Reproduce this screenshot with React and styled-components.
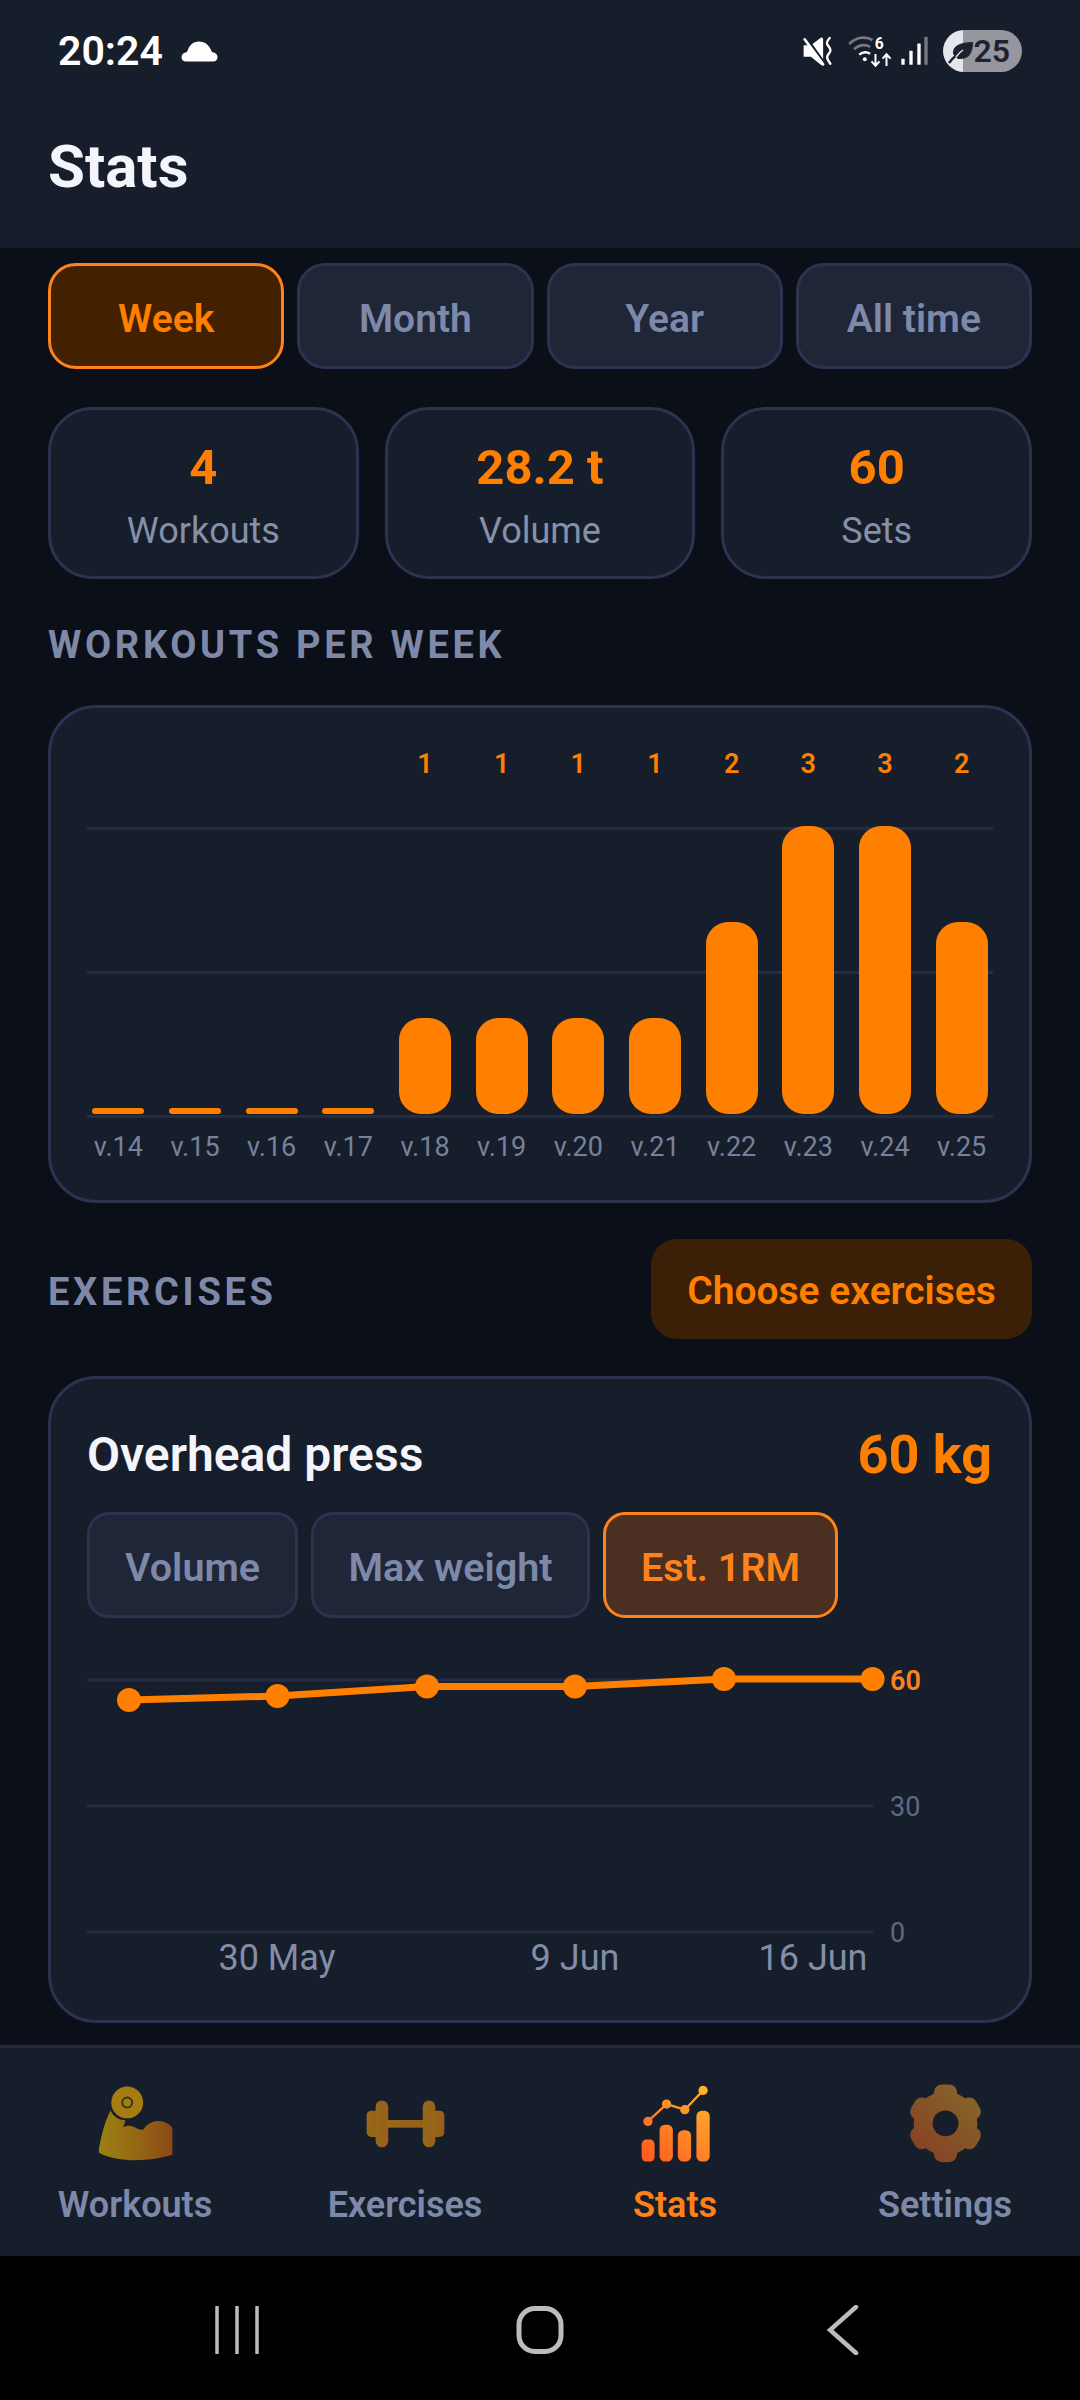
import React from "react";
import styled, { createGlobalStyle } from "styled-components";

const ORANGE = "#ff7f00";
const MUTED = "#7e89a9";
const CARD = "#171e2b";
const LINE = "#2b3350";

const GlobalStyle = createGlobalStyle`
  html, body { margin: 0; padding: 0; background: #0b0f17; }
  * { box-sizing: border-box; }
  body { font-family: Roboto, "Liberation Sans", sans-serif; }
`;

const Screen = styled.div`
  width: 1080px;
  height: 2400px;
  display: flex;
  flex-direction: column;
  overflow: hidden;
  background: #0b0f17;
`;

const Header = styled.header`
  height: 248px;
  background: ${CARD};
  flex: none;
`;

const StatusBar = styled.div`
  height: 102px;
  padding: 0 58px;
  display: flex;
  align-items: center;
  justify-content: space-between;
`;

const StatusLeft = styled.div`
  display: flex;
  align-items: center;
  gap: 18px;
  color: #fff;
  font-size: 41px;
  font-weight: 600;
`;

const StatusRight = styled.div`
  display: flex;
  align-items: center;
`;

const StatusGap = styled.div`
  width: ${(p) => p.$width}px;
`;

const BatteryPill = styled.div`
  width: 79px;
  height: 42px;
  margin-left: 13px;
  border-radius: 21px;
  display: flex;
  align-items: center;
  justify-content: flex-end;
  padding-right: 12px;
  position: relative;
  background: linear-gradient(90deg, #e6e6ea 0 25%, #96969f 25% 100%);
  color: #1c2230;
  font-size: 32px;
  font-weight: 600;
`;

const Leaf = styled.svg`
  position: absolute;
  left: 4px;
  top: 7px;
`;

const Title = styled.h1`
  margin: 0;
  padding: 37px 0 0 48px;
  font-size: 60px;
  line-height: 56px;
  font-weight: 700;
  color: #f3f5fb;
`;

const Main = styled.main`
  flex: 1;
  padding: 15px 48px 0;
  min-height: 0;
`;

const TabRow = styled.div`
  display: flex;
  gap: 13px;
`;

const Tab = styled.button`
  flex: 1;
  height: 106px;
  padding: 5px 0 0;
  border-radius: 28px;
  border: 3px solid ${(p) => (p.$active ? "#ff831c" : LINE)};
  background: ${(p) => (p.$active ? "#432000" : "#1e2638")};
  color: ${(p) => (p.$active ? ORANGE : MUTED)};
  font: 600 39px Roboto, sans-serif;
`;

const StatRow = styled.div`
  display: flex;
  gap: 26px;
  margin-top: 38px;
`;

const StatCard = styled.div`
  flex: 1;
  height: 172px;
  border-radius: 44px;
  border: 3px solid ${LINE};
  background: ${CARD};
  display: flex;
  flex-direction: column;
  align-items: center;
  padding-top: 31px;
`;

const StatValue = styled.div`
  font-size: 49px;
  line-height: 54px;
  font-weight: 700;
  color: ${ORANGE};
`;

const StatLabel = styled.div`
  margin-top: 14px;
  font-size: 36px;
  line-height: 44px;
  color: #8690a8;
`;

const SectionTitle = styled.h2`
  margin: 0;
  padding-top: ${(p) => p.$nudge || 0}px;
  font-size: 38px;
  line-height: 44px;
  font-weight: 700;
  letter-spacing: 3.7px;
  color: ${MUTED};
`;

const WeekTitle = styled(SectionTitle)`
  margin-top: 44px;
`;

const Card = styled.section`
  border-radius: 48px;
  border: 3px solid ${LINE};
  background: ${CARD};
`;

const BarCard = styled(Card)`
  height: 498px;
  margin-top: 38px;
  padding: 41px 29px 0;
`;

const ColumnGrid = styled.div`
  display: grid;
  grid-template-columns: repeat(12, 1fr);
  justify-items: center;
`;

const BarValue = styled.div`
  height: 30px;
  font-size: 27px;
  line-height: 30px;
  font-weight: 600;
  color: ${ORANGE};
`;

const Plot = styled(ColumnGrid)`
  position: relative;
  height: 292px;
  margin-top: 46px;
  padding-bottom: 3px;
  align-items: end;
`;

const GridLine = styled.div`
  position: absolute;
  left: 7px;
  right: 7px;
  top: ${(p) => p.$top}px;
  height: 3px;
  background: #262d42;
`;

const Bar = styled.div`
  position: relative;
  width: 52px;
  height: ${(p) => p.$height}px;
  border-radius: ${(p) => (p.$height < 20 ? 3 : 22)}px;
  background: ${ORANGE};
`;

const WeekLabels = styled(ColumnGrid)`
  margin-top: 15px;
`;

const WeekLabel = styled.div`
  font-size: 27px;
  line-height: 30px;
  color: #77819b;
`;

const ExerciseHead = styled.div`
  display: flex;
  align-items: center;
  justify-content: space-between;
  margin-top: 36px;
`;

const ChooseButton = styled.button`
  width: 381px;
  height: 100px;
  padding: 3px 0 0;
  border: 0;
  border-radius: 26px;
  background: #3b1f07;
  color: ${ORANGE};
  font: 600 39px Roboto, sans-serif;
`;

const ExerciseCard = styled(Card)`
  height: 647px;
  margin-top: 37px;
  padding: 46px 37px 0 36px;
`;

const ExerciseTop = styled.div`
  display: flex;
  align-items: center;
  justify-content: space-between;
  height: 58px;
`;

const ExerciseName = styled.div`
  font-size: 48px;
  font-weight: 600;
  color: #f3f5fb;
`;

const ExerciseWeight = styled.div`
  font-size: 54px;
  font-weight: 700;
  color: ${ORANGE};
`;

const ChipRow = styled.div`
  display: flex;
  gap: 13px;
  margin-top: 29px;
`;

const Chip = styled.button`
  height: 106px;
  width: ${(p) => p.$width}px;
  padding: 5px 0 0;
  border-radius: 22px;
  border: 3px solid ${(p) => (p.$active ? "#ff831c" : LINE)};
  background: ${(p) => (p.$active ? "#4b2f20" : "#1e2638")};
  color: ${(p) => (p.$active ? "#ff831c" : MUTED)};
  font: 600 39.5px Roboto, sans-serif;
`;

const LineSvg = styled.svg`
  display: block;
  margin: 32px 0 0 1px;
  overflow: visible;
  font-family: Roboto, sans-serif;
`;

const BottomNav = styled.nav`
  height: 211px;
  flex: none;
  display: grid;
  grid-template-columns: repeat(4, 1fr);
  padding-top: 35px;
  border-top: 3px solid #232a3e;
  background: ${CARD};
`;

const NavItem = styled.div`
  display: flex;
  flex-direction: column;
  align-items: center;
  color: ${(p) => (p.$active ? "#ff8016" : MUTED)};
  font-size: 36px;
  line-height: 40px;
  font-weight: 600;
`;

const NavLabel = styled.span`
  margin-top: 22px;
`;

const SystemBar = styled.div`
  height: 144px;
  flex: none;
  background: #000;
  display: flex;
  justify-content: center;
  align-items: center;
  padding-top: 4px;
`;

const SystemSlot = styled.div`
  width: 303px;
  display: flex;
  justify-content: center;
`;

const weeks = [14, 15, 16, 17, 18, 19, 20, 21, 22, 23, 24, 25];
const counts = [0, 0, 0, 0, 1, 1, 1, 1, 2, 3, 3, 2];
const linePoints = [
  [41, 50],
  [189.5, 46],
  [339, 36.5],
  [487, 36.5],
  [636, 29],
  [784.6, 29],
];

function CloudIcon() {
  return (
    <svg width="37" height="21" viewBox="0 0 37 21">
      <path
        d="M5 20.500C2 20.500 .5 18.500 .5 16S2.500 11.500 6 11C8 4.500 12 .5 18 .5S28.500 4.500 31 11c3.500 .5 5.500 2.500 5.500 5s-1.500 4.500-4.500 4.500Z"
        fill="#fff"
      />
    </svg>
  );
}

function MuteIcon() {
  return (
    <svg width="33" height="33" viewBox="185 75 100 100">
      <path d="M193 106h22l32-24 5 4v78l-5 3-32-26h-22Z" fill="#fff" />
      <path d="M202 84l60 84" stroke={CARD} strokeWidth="7" />
      <path d="M196 88l56 76" stroke="#fff" strokeWidth="8" strokeLinecap="round" />
      <path
        d="M272 84c-12 13-10 17-3 26 7 9 7 13 0 22s-7 13 5 30"
        fill="none"
        stroke="#fff"
        strokeWidth="7"
        strokeLinecap="round"
      />
    </svg>
  );
}

function WifiIcon() {
  return (
    <svg width="47" height="35" viewBox="320 70 140 105">
      <path d="M329 100c22-22 50-24 70-12" fill="none" stroke="#777a83" strokeWidth="8" />
      <path d="M344 116c14-13 32-15 48-8" fill="none" stroke="#777a83" strokeWidth="8" />
      <path d="M359 132c10-8 22-9 33-3" fill="none" stroke="#fff" strokeWidth="7" />
      <circle cx="376" cy="146" r="6" fill="#fff" />
      <text x="406" y="116" fontFamily="Roboto, sans-serif" fontSize="47" fontWeight="700" fill="#fff">
        6
      </text>
      <path d="M408 130v34m-12-12 12 13 12-13" fill="none" stroke="#fff" strokeWidth="6" />
      <path d="M441 166v-34m-12 12 12-13 12 13" fill="none" stroke="#fff" strokeWidth="6" />
    </svg>
  );
}

function SignalIcon() {
  return (
    <svg width="30" height="32" viewBox="480 75 90 95">
      <rect x="484" y="146" width="10" height="18" rx="2" fill="#fff" />
      <rect x="508" y="122" width="10" height="42" rx="2" fill="#fff" />
      <rect x="532" y="100" width="10" height="64" rx="2" fill="#fff" />
      <rect x="553" y="80" width="10" height="84" rx="2" fill="#777a83" />
    </svg>
  );
}

function LeafIcon() {
  return (
    <Leaf width="28" height="28" viewBox="0 0 28 28">
      <path d="M6 17C5 9 13 5 26 5c0 12-5 18-15 17" fill="#1c2230" />
      <path d="M2 26C7 19 11 16 19 11" fill="none" stroke="#1c2230" strokeWidth="2.500" />
      <path d="M9 20C12 16 13 15 16 13" fill="none" stroke="#e6e6ea" strokeWidth="1.500" />
    </Leaf>
  );
}

function WorkoutsIcon() {
  return (
    <svg width="83" height="80" viewBox="100 70 250 240">
      <defs>
        <linearGradient id="armFill" x1="0" y1="0" x2="1" y2="0">
          <stop offset="0" stopColor="#9a8210" />
          <stop offset="0.5" stopColor="#966814" />
          <stop offset="1" stopColor="#8c4818" />
        </linearGradient>
      </defs>
      <path
        d="M150 152C158 170 172 180 195 182L188 203C200 195 215 198 222 203 232 208 240 212 248 210 258 195 275 183 295 184 315 185 330 195 336 205V286C290 300 250 302 225 302 185 302 145 295 116 280 113 275 115 265 118 252 125 215 135 180 150 152Z"
        fill="url(#armFill)"
      />
      <circle cx="200" cy="128" r="48" fill="#a47c10" />
      <circle cx="200" cy="128" r="15" fill="none" stroke="#3a3320" strokeWidth="6" />
    </svg>
  );
}

function DumbbellIcon() {
  return (
    <svg width="83" height="80" viewBox="910 70 250 240">
      <defs>
        <linearGradient id="bellFill" x1="0" y1="0" x2="1" y2="0">
          <stop offset="0" stopColor="#966a18" />
          <stop offset="1" stopColor="#985e1c" />
        </linearGradient>
      </defs>
      <g fill="url(#bellFill)">
        <rect x="918" y="153" width="40" height="79" rx="14" />
        <rect x="945" y="122" width="38" height="141" rx="19" />
        <rect x="975" y="181" width="120" height="23" />
        <rect x="1087" y="122" width="38" height="141" rx="19" />
        <rect x="1112" y="153" width="40" height="79" rx="14" />
      </g>
    </svg>
  );
}

function StatsIcon() {
  return (
    <svg width="83" height="80" viewBox="100 70 250 240">
      <defs>
        <linearGradient id="statFill" gradientUnits="userSpaceOnUse" x1="123" y1="306" x2="328" y2="92">
          <stop offset="0" stopColor="#ff5520" />
          <stop offset="1" stopColor="#ffb52c" />
        </linearGradient>
      </defs>
      <g fill="url(#statFill)">
        <rect x="123" y="240" width="39" height="66" rx="14" />
        <rect x="177" y="195" width="40" height="111" rx="16" />
        <rect x="232" y="212" width="40" height="94" rx="16" />
        <rect x="288" y="153" width="40" height="153" rx="16" />
        <circle cx="142" cy="185" r="14" />
        <circle cx="198" cy="133" r="14" />
        <circle cx="253" cy="150" r="14" />
        <circle cx="308" cy="92" r="14" />
      </g>
      <path
        d="M142 185 198 133 253 150 308 92"
        fill="none"
        stroke="url(#statFill)"
        strokeWidth="7"
      />
    </svg>
  );
}

function GearIcon() {
  return (
    <svg width="83" height="80" viewBox="910 70 250 240">
      <defs>
        <linearGradient id="gearFill" x1="0" y1="1" x2="1" y2="0">
          <stop offset="0" stopColor="#863a24" />
          <stop offset="1" stopColor="#866c2a" />
        </linearGradient>
        <mask id="gearShape">
          <g fill="#fff">
            <circle cx="1035" cy="191" r="96" />
            <rect x="1000" y="74" width="70" height="234" rx="24" />
            <rect x="1000" y="78" width="70" height="226" rx="24" transform="rotate(60 1035 191)" />
            <rect x="1000" y="78" width="70" height="226" rx="24" transform="rotate(120 1035 191)" />
          </g>
          <circle cx="1035" cy="191" r="39" fill="#000" />
        </mask>
      </defs>
      <rect x="910" y="70" width="250" height="240" fill="url(#gearFill)" mask="url(#gearShape)" />
    </svg>
  );
}

function MenuIcon() {
  return (
    <svg width="46" height="48" viewBox="0 0 46 48">
      <path d="M3 1v46M23 1v46M43 1v46" stroke="#bcbcbc" strokeWidth="3.500" strokeLinecap="round" />
    </svg>
  );
}

function HomeIcon() {
  return (
    <svg width="48" height="48" viewBox="0 0 48 48">
      <rect x="3" y="2.500" width="42" height="43" rx="16" fill="none" stroke="#bcbcbc" strokeWidth="5" />
    </svg>
  );
}

function BackIcon() {
  return (
    <svg width="32" height="50" viewBox="0 0 32 50">
      <path d="M29 2 3 25l26 23" fill="none" stroke="#bcbcbc" strokeWidth="4.500" strokeLinecap="round" />
    </svg>
  );
}

function WeekChart() {
  return (
    <BarCard>
      <ColumnGrid>
        {counts.map((count, i) => (
          <BarValue key={weeks[i]}>{count > 0 ? count : ""}</BarValue>
        ))}
      </ColumnGrid>
      <Plot>
        <GridLine $top={2} />
        <GridLine $top={146} />
        <GridLine $top={290} />
        {counts.map((count, i) => (
          <Bar key={weeks[i]} $height={count === 0 ? 6 : count * 96} />
        ))}
      </Plot>
      <WeekLabels>
        {weeks.map((week) => (
          <WeekLabel key={week}>v.{week}</WeekLabel>
        ))}
      </WeekLabels>
    </BarCard>
  );
}

function LineChart() {
  return (
    <LineSvg width="904" height="330" viewBox="0 0 904 330">
      {[30, 156, 282].map((y) => (
        <line key={y} x1="-1" x2="785" y1={y} y2={y} stroke="#262d42" strokeWidth="3" />
      ))}
      <polyline
        points={linePoints.map((p) => p.join(",")).join(" ")}
        fill="none"
        stroke={ORANGE}
        strokeWidth="7"
      />
      {linePoints.map(([x, y]) => (
        <circle key={x} cx={x} cy={y} r="12" fill={ORANGE} />
      ))}
      <text x="802" y="40" fontSize="27" fontWeight="600" fill="#ff831c">
        60
      </text>
      <text x="802" y="166" fontSize="27" fill="#5f6980">
        30
      </text>
      <text x="802" y="292" fontSize="27" fill="#5f6980">
        0
      </text>
      <g fontSize="36" fill="#838da8" textAnchor="middle">
        <text x="189" y="320">
          30 May
        </text>
        <text x="487" y="320">
          9 Jun
        </text>
        <text x="725" y="320">
          16 Jun
        </text>
      </g>
    </LineSvg>
  );
}

export default function App() {
  return (
    <Screen>
      <GlobalStyle />
      <Header>
        <StatusBar>
          <StatusLeft>
            20:24
            <CloudIcon />
          </StatusLeft>
          <StatusRight>
            <MuteIcon />
            <StatusGap $width={12} />
            <WifiIcon />
            <StatusGap $width={7} />
            <SignalIcon />
            <BatteryPill>
              <LeafIcon />
              25
            </BatteryPill>
          </StatusRight>
        </StatusBar>
        <Title>Stats</Title>
      </Header>
      <Main>
        <TabRow>
          <Tab $active>Week</Tab>
          <Tab>Month</Tab>
          <Tab>Year</Tab>
          <Tab>All time</Tab>
        </TabRow>
        <StatRow>
          <StatCard>
            <StatValue>4</StatValue>
            <StatLabel>Workouts</StatLabel>
          </StatCard>
          <StatCard>
            <StatValue>28.2 t</StatValue>
            <StatLabel>Volume</StatLabel>
          </StatCard>
          <StatCard>
            <StatValue>60</StatValue>
            <StatLabel>Sets</StatLabel>
          </StatCard>
        </StatRow>
        <WeekTitle>WORKOUTS PER WEEK</WeekTitle>
        <WeekChart />
        <ExerciseHead>
          <SectionTitle $nudge={5}>EXERCISES</SectionTitle>
          <ChooseButton>Choose exercises</ChooseButton>
        </ExerciseHead>
        <ExerciseCard>
          <ExerciseTop>
            <ExerciseName>Overhead press</ExerciseName>
            <ExerciseWeight>60 kg</ExerciseWeight>
          </ExerciseTop>
          <ChipRow>
            <Chip $width={211}>Volume</Chip>
            <Chip $width={279}>Max weight</Chip>
            <Chip $width={235} $active>
              Est. 1RM
            </Chip>
          </ChipRow>
          <LineChart />
        </ExerciseCard>
      </Main>
      <BottomNav>
        <NavItem>
          <WorkoutsIcon />
          <NavLabel>Workouts</NavLabel>
        </NavItem>
        <NavItem>
          <DumbbellIcon />
          <NavLabel>Exercises</NavLabel>
        </NavItem>
        <NavItem $active>
          <StatsIcon />
          <NavLabel>Stats</NavLabel>
        </NavItem>
        <NavItem>
          <GearIcon />
          <NavLabel>Settings</NavLabel>
        </NavItem>
      </BottomNav>
      <SystemBar>
        <SystemSlot>
          <MenuIcon />
        </SystemSlot>
        <SystemSlot>
          <HomeIcon />
        </SystemSlot>
        <SystemSlot>
          <BackIcon />
        </SystemSlot>
      </SystemBar>
    </Screen>
  );
}
